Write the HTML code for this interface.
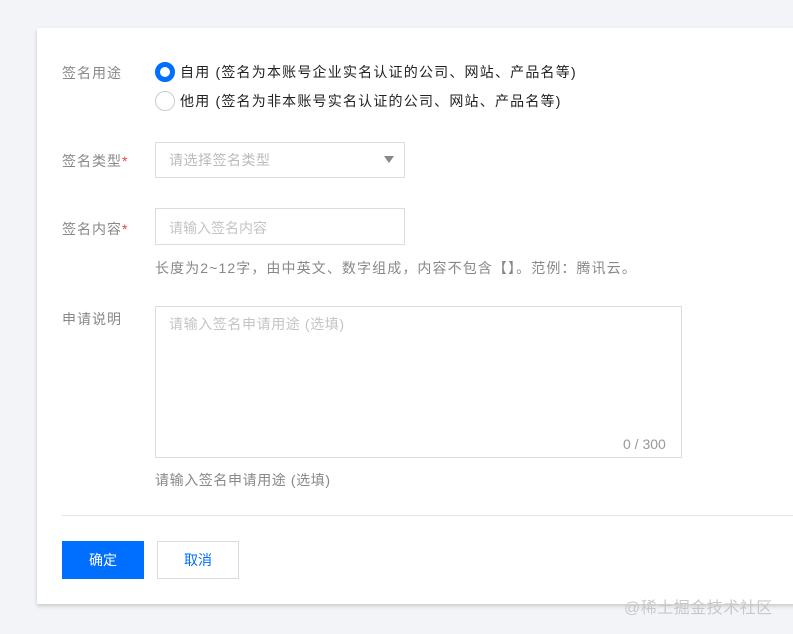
<!DOCTYPE html>
<html><head><meta charset="utf-8"><style>
*{box-sizing:border-box;margin:0;padding:0}
body{width:793px;height:634px;background:#f3f4f7;font-family:"Liberation Sans","Noto Sans CJK SC",sans-serif;font-size:14px;position:relative;overflow:hidden;color:#333}
.card{position:absolute;left:37px;top:28px;width:760px;height:576px;background:#fff;box-shadow:0 2px 4px rgba(0,0,0,.18)}
.a{position:absolute;white-space:nowrap}
.lbl{color:#888;font-size:14px;letter-spacing:1px}
.star{color:#e54545}
.box{position:absolute;border:1px solid #dcdcdc;background:#fff}
.ph{color:#bbb;font-size:14px}
.radio{position:absolute;width:20px;height:20px;border-radius:50%}
</style></head><body>
<div class="card"></div>
<div class="a lbl" style="left:62px;top:63px">签名用途</div>
<div class="radio" style="left:155px;top:62px;border:5px solid #006eff;background:#fff"></div>
<div class="a" style="left:180px;top:62px;color:#222;letter-spacing:1.2px">自用 (签名为本账号企业实名认证的公司、网站、产品名等)</div>
<div class="radio" style="left:155px;top:91px;border:1px solid #ccc"></div>
<div class="a" style="left:180px;top:91px;color:#222;letter-spacing:1.2px">他用 (签名为非本账号实名认证的公司、网站、产品名等)</div>

<div class="a lbl" style="left:62px;top:151px">签名类型<span class="star">*</span></div>
<div class="box" style="left:155px;top:142px;width:250px;height:36px"></div>
<div class="a ph" style="left:169px;top:150px;letter-spacing:0.5px">请选择签名类型</div>
<div class="a" style="left:384px;top:156px;width:0;height:0;border-left:5px solid transparent;border-right:5px solid transparent;border-top:7px solid #888"></div>

<div class="a lbl" style="left:62px;top:219px">签名内容<span class="star">*</span></div>
<div class="box" style="left:155px;top:208px;width:250px;height:37px"></div>
<div class="a ph" style="left:169px;top:218px;font-size:14px;color:#c4c4c4">请输入签名内容</div>
<div class="a" style="left:155px;top:258px;color:#888;font-size:14px;letter-spacing:1.1px">长度为2~12字，由中英文、数字组成，内容不包含【】。范例：腾讯云。</div>

<div class="a lbl" style="left:62px;top:309px">申请说明</div>
<div class="box" style="left:155px;top:306px;width:527px;height:152px"></div>
<div class="a ph" style="left:169px;top:314px;font-size:14px;color:#c4c4c4;letter-spacing:0.6px">请输入签名申请用途 (选填)</div>
<div class="a" style="left:623px;top:436px;color:#999;font-size:14px">0 / 300</div>
<div class="a" style="left:155px;top:470px;color:#888;font-size:14px;letter-spacing:0.6px">请输入签名申请用途 (选填)</div>

<div class="a" style="left:62px;top:515px;width:731px;height:1px;background:#e6e6e6"></div>
<div class="a" style="left:62px;top:541px;width:82px;height:38px;background:#006eff;color:#fff;text-align:center;line-height:38px">确定</div>
<div class="a" style="left:157px;top:541px;width:82px;height:38px;border:1px solid #dcdcdc;color:#006eff;text-align:center;line-height:36px">取消</div>
<div class="a" style="left:624px;top:594px;color:#c8c8c8;font-size:16px;letter-spacing:0.5px">@稀土掘金技术社区</div>
</body></html>
